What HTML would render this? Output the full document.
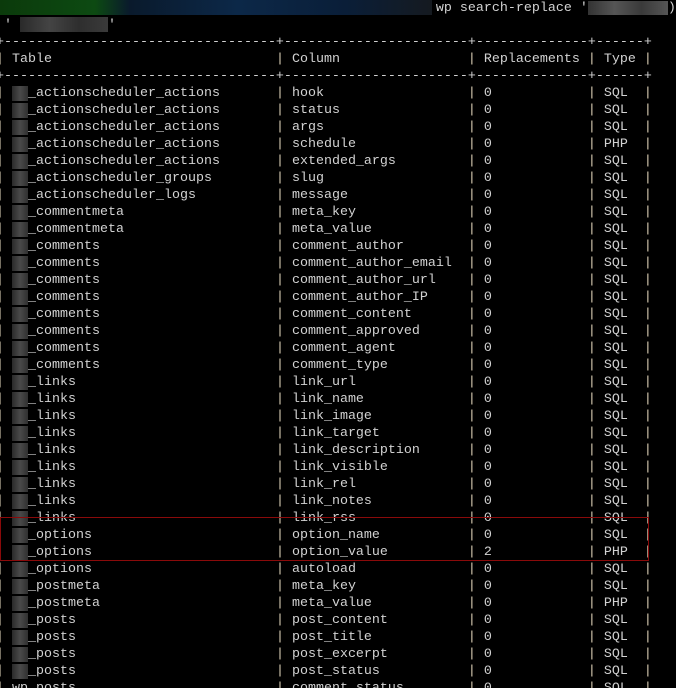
<!DOCTYPE html>
<html><head><meta charset="utf-8"><style>
html,body{margin:0;padding:0;background:#000;width:676px;height:688px;overflow:hidden;position:relative}
pre{position:absolute;left:-4px;top:0px;margin:0;font-family:"Liberation Mono",monospace;font-size:13.33px;line-height:17px;color:#d2d2d2;white-space:pre}
.p{color:#d9cdb4}
.b{background:linear-gradient(90deg,#2a2a2a,#4a4a4a,#303030);color:transparent}
#bar{position:absolute;left:0;top:0;width:432px;height:15px;background:linear-gradient(90deg,#0b3a0b 0,#0d4a12 22%,#0a1a2c 30%,#0c2848 55%,#0a1e38 80%,#151a20 100%)}
#blur1{position:absolute;left:588px;top:1px;width:80px;height:14px;background:linear-gradient(90deg,#333,#555,#3a3a3a,#555)}
#blur2{position:absolute;left:20px;top:17px;width:88px;height:15px;background:linear-gradient(90deg,#2a2a2a,#444,#2e2e2e,#3a3a3a)}
#box{position:absolute;left:0;top:517px;width:647px;height:42px;border:1px solid #8a0a0a}
</style></head><body>
<div id="bar"></div>
<pre>                                                       wp search-replace '          )
 '            '
+----------------------------------+-----------------------+--------------+------+
<span class="p">|</span> Table                            <span class="p">|</span> Column                <span class="p">|</span> Replacements <span class="p">|</span> Type <span class="p">|</span>
+----------------------------------+-----------------------+--------------+------+
<span class="p">|</span> <span class="b">wp</span>_actionscheduler_actions       <span class="p">|</span> hook                  <span class="p">|</span> 0            <span class="p">|</span> SQL  <span class="p">|</span>
<span class="p">|</span> <span class="b">wp</span>_actionscheduler_actions       <span class="p">|</span> status                <span class="p">|</span> 0            <span class="p">|</span> SQL  <span class="p">|</span>
<span class="p">|</span> <span class="b">wp</span>_actionscheduler_actions       <span class="p">|</span> args                  <span class="p">|</span> 0            <span class="p">|</span> SQL  <span class="p">|</span>
<span class="p">|</span> <span class="b">wp</span>_actionscheduler_actions       <span class="p">|</span> schedule              <span class="p">|</span> 0            <span class="p">|</span> PHP  <span class="p">|</span>
<span class="p">|</span> <span class="b">wp</span>_actionscheduler_actions       <span class="p">|</span> extended_args         <span class="p">|</span> 0            <span class="p">|</span> SQL  <span class="p">|</span>
<span class="p">|</span> <span class="b">wp</span>_actionscheduler_groups        <span class="p">|</span> slug                  <span class="p">|</span> 0            <span class="p">|</span> SQL  <span class="p">|</span>
<span class="p">|</span> <span class="b">wp</span>_actionscheduler_logs          <span class="p">|</span> message               <span class="p">|</span> 0            <span class="p">|</span> SQL  <span class="p">|</span>
<span class="p">|</span> <span class="b">wp</span>_commentmeta                   <span class="p">|</span> meta_key              <span class="p">|</span> 0            <span class="p">|</span> SQL  <span class="p">|</span>
<span class="p">|</span> <span class="b">wp</span>_commentmeta                   <span class="p">|</span> meta_value            <span class="p">|</span> 0            <span class="p">|</span> SQL  <span class="p">|</span>
<span class="p">|</span> <span class="b">wp</span>_comments                      <span class="p">|</span> comment_author        <span class="p">|</span> 0            <span class="p">|</span> SQL  <span class="p">|</span>
<span class="p">|</span> <span class="b">wp</span>_comments                      <span class="p">|</span> comment_author_email  <span class="p">|</span> 0            <span class="p">|</span> SQL  <span class="p">|</span>
<span class="p">|</span> <span class="b">wp</span>_comments                      <span class="p">|</span> comment_author_url    <span class="p">|</span> 0            <span class="p">|</span> SQL  <span class="p">|</span>
<span class="p">|</span> <span class="b">wp</span>_comments                      <span class="p">|</span> comment_author_IP     <span class="p">|</span> 0            <span class="p">|</span> SQL  <span class="p">|</span>
<span class="p">|</span> <span class="b">wp</span>_comments                      <span class="p">|</span> comment_content       <span class="p">|</span> 0            <span class="p">|</span> SQL  <span class="p">|</span>
<span class="p">|</span> <span class="b">wp</span>_comments                      <span class="p">|</span> comment_approved      <span class="p">|</span> 0            <span class="p">|</span> SQL  <span class="p">|</span>
<span class="p">|</span> <span class="b">wp</span>_comments                      <span class="p">|</span> comment_agent         <span class="p">|</span> 0            <span class="p">|</span> SQL  <span class="p">|</span>
<span class="p">|</span> <span class="b">wp</span>_comments                      <span class="p">|</span> comment_type          <span class="p">|</span> 0            <span class="p">|</span> SQL  <span class="p">|</span>
<span class="p">|</span> <span class="b">wp</span>_links                         <span class="p">|</span> link_url              <span class="p">|</span> 0            <span class="p">|</span> SQL  <span class="p">|</span>
<span class="p">|</span> <span class="b">wp</span>_links                         <span class="p">|</span> link_name             <span class="p">|</span> 0            <span class="p">|</span> SQL  <span class="p">|</span>
<span class="p">|</span> <span class="b">wp</span>_links                         <span class="p">|</span> link_image            <span class="p">|</span> 0            <span class="p">|</span> SQL  <span class="p">|</span>
<span class="p">|</span> <span class="b">wp</span>_links                         <span class="p">|</span> link_target           <span class="p">|</span> 0            <span class="p">|</span> SQL  <span class="p">|</span>
<span class="p">|</span> <span class="b">wp</span>_links                         <span class="p">|</span> link_description      <span class="p">|</span> 0            <span class="p">|</span> SQL  <span class="p">|</span>
<span class="p">|</span> <span class="b">wp</span>_links                         <span class="p">|</span> link_visible          <span class="p">|</span> 0            <span class="p">|</span> SQL  <span class="p">|</span>
<span class="p">|</span> <span class="b">wp</span>_links                         <span class="p">|</span> link_rel              <span class="p">|</span> 0            <span class="p">|</span> SQL  <span class="p">|</span>
<span class="p">|</span> <span class="b">wp</span>_links                         <span class="p">|</span> link_notes            <span class="p">|</span> 0            <span class="p">|</span> SQL  <span class="p">|</span>
<span class="p">|</span> <span class="b">wp</span>_links                         <span class="p">|</span> link_rss              <span class="p">|</span> 0            <span class="p">|</span> SQL  <span class="p">|</span>
<span class="p">|</span> <span class="b">wp</span>_options                       <span class="p">|</span> option_name           <span class="p">|</span> 0            <span class="p">|</span> SQL  <span class="p">|</span>
<span class="p">|</span> <span class="b">wp</span>_options                       <span class="p">|</span> option_value          <span class="p">|</span> 2            <span class="p">|</span> PHP  <span class="p">|</span>
<span class="p">|</span> <span class="b">wp</span>_options                       <span class="p">|</span> autoload              <span class="p">|</span> 0            <span class="p">|</span> SQL  <span class="p">|</span>
<span class="p">|</span> <span class="b">wp</span>_postmeta                      <span class="p">|</span> meta_key              <span class="p">|</span> 0            <span class="p">|</span> SQL  <span class="p">|</span>
<span class="p">|</span> <span class="b">wp</span>_postmeta                      <span class="p">|</span> meta_value            <span class="p">|</span> 0            <span class="p">|</span> PHP  <span class="p">|</span>
<span class="p">|</span> <span class="b">wp</span>_posts                         <span class="p">|</span> post_content          <span class="p">|</span> 0            <span class="p">|</span> SQL  <span class="p">|</span>
<span class="p">|</span> <span class="b">wp</span>_posts                         <span class="p">|</span> post_title            <span class="p">|</span> 0            <span class="p">|</span> SQL  <span class="p">|</span>
<span class="p">|</span> <span class="b">wp</span>_posts                         <span class="p">|</span> post_excerpt          <span class="p">|</span> 0            <span class="p">|</span> SQL  <span class="p">|</span>
<span class="p">|</span> <span class="b">wp</span>_posts                         <span class="p">|</span> post_status           <span class="p">|</span> 0            <span class="p">|</span> SQL  <span class="p">|</span>
<span class="p">|</span> wp_posts                         <span class="p">|</span> comment_status        <span class="p">|</span> 0            <span class="p">|</span> SQL  <span class="p">|</span>
</pre>
<div id="blur1"></div>
<div id="blur2"></div>
<div id="box"></div>
</body></html>
